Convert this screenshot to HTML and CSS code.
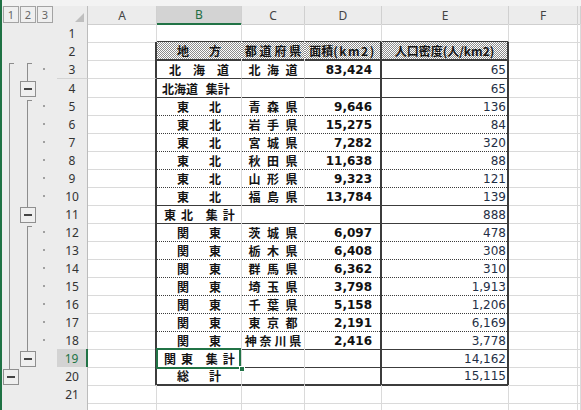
FILE: index.html
```html
<!DOCTYPE html>
<html lang="ja">
<head>
<meta charset="utf-8">
<title>Sheet</title>
<link rel="stylesheet" href="styles.css">
</head>
<body>
<div class="app">
  <div class="topbar"></div>

  <div class="row hdr">
    <div class="ol-btns"><span class="lvl">1</span><span class="lvl">2</span><span class="lvl">3</span></div>
    <div class="corner"><span class="tri"></span></div>
    <div class="ch">A</div>
    <div class="ch hl">B</div>
    <div class="ch">C</div>
    <div class="ch">D</div>
    <div class="ch">E</div>
    <div class="ch">F</div>
    <div class="ch"></div>
  </div>

  <div class="row top">
    <div class="ol"><i></i><i></i><i></i></div>
    <div class="rh">1</div>
    <div class="c a"></div><div class="c t b"></div><div class="c t cc"></div><div class="c t d"></div><div class="c t e"></div><div class="c f"></div><div class="c g"></div>
  </div>

  <div class="row in hd">
    <div class="ol"><i></i><i></i><i></i></div>
    <div class="rh">2</div>
    <div class="c a"></div>
    <div class="c t b dist"><span>地</span><span>方</span></div>
    <div class="c t cc dist"><span>都</span><span>道</span><span>府</span><span>県</span></div>
    <div class="c t d ctr">面積<span class="wide">(km2)</span></div>
    <div class="c t e ctr">人口密度(人/km2)</div>
    <div class="c f"></div><div class="c g"></div>
  </div>

  <div class="row in sol tall">
    <div class="ol"><i class="l1 start"></i><i class="l2 start"></i><i class="dot"></i></div>
    <div class="rh">3</div>
    <div class="c a"></div>
    <div class="c t b dist"><span>北</span><span>海</span><span>道</span></div>
    <div class="c t cc dist"><span>北</span><span>海</span><span>道</span></div>
    <div class="c t d num">83,424</div>
    <div class="c t e num">65</div>
    <div class="c f"></div><div class="c g"></div>
  </div>

  <div class="row in sol">
    <div class="ol"><i class="l1 line"></i><i class="l2 box"><b></b></i><i></i></div>
    <div class="rh">4</div>
    <div class="c a"></div>
    <div class="c t b lbl">北海道 集計</div>
    <div class="c t cc"></div>
    <div class="c t d"></div>
    <div class="c t e num">65</div>
    <div class="c f"></div><div class="c g"></div>
  </div>

  <div class="row in dot">
    <div class="ol"><i class="l1 line"></i><i class="l2 start"></i><i class="dot"></i></div>
    <div class="rh">5</div>
    <div class="c a"></div>
    <div class="c t b dist"><span>東</span><span>北</span></div>
    <div class="c t cc dist"><span>青</span><span>森</span><span>県</span></div>
    <div class="c t d num">9,646</div>
    <div class="c t e num">136</div>
    <div class="c f"></div><div class="c g"></div>
  </div>

  <div class="row in dot">
    <div class="ol"><i class="l1 line"></i><i class="l2 line"></i><i class="dot"></i></div>
    <div class="rh">6</div>
    <div class="c a"></div>
    <div class="c t b dist"><span>東</span><span>北</span></div>
    <div class="c t cc dist"><span>岩</span><span>手</span><span>県</span></div>
    <div class="c t d num">15,275</div>
    <div class="c t e num">84</div>
    <div class="c f"></div><div class="c g"></div>
  </div>

  <div class="row in dot">
    <div class="ol"><i class="l1 line"></i><i class="l2 line"></i><i class="dot"></i></div>
    <div class="rh">7</div>
    <div class="c a"></div>
    <div class="c t b dist"><span>東</span><span>北</span></div>
    <div class="c t cc dist"><span>宮</span><span>城</span><span>県</span></div>
    <div class="c t d num">7,282</div>
    <div class="c t e num">320</div>
    <div class="c f"></div><div class="c g"></div>
  </div>

  <div class="row in dot">
    <div class="ol"><i class="l1 line"></i><i class="l2 line"></i><i class="dot"></i></div>
    <div class="rh">8</div>
    <div class="c a"></div>
    <div class="c t b dist"><span>東</span><span>北</span></div>
    <div class="c t cc dist"><span>秋</span><span>田</span><span>県</span></div>
    <div class="c t d num">11,638</div>
    <div class="c t e num">88</div>
    <div class="c f"></div><div class="c g"></div>
  </div>

  <div class="row in dot">
    <div class="ol"><i class="l1 line"></i><i class="l2 line"></i><i class="dot"></i></div>
    <div class="rh">9</div>
    <div class="c a"></div>
    <div class="c t b dist"><span>東</span><span>北</span></div>
    <div class="c t cc dist"><span>山</span><span>形</span><span>県</span></div>
    <div class="c t d num">9,323</div>
    <div class="c t e num">121</div>
    <div class="c f"></div><div class="c g"></div>
  </div>

  <div class="row in sol">
    <div class="ol"><i class="l1 line"></i><i class="l2 line"></i><i class="dot"></i></div>
    <div class="rh">10</div>
    <div class="c a"></div>
    <div class="c t b dist"><span>東</span><span>北</span></div>
    <div class="c t cc dist"><span>福</span><span>島</span><span>県</span></div>
    <div class="c t d num">13,784</div>
    <div class="c t e num">139</div>
    <div class="c f"></div><div class="c g"></div>
  </div>

  <div class="row in sol">
    <div class="ol"><i class="l1 line"></i><i class="l2 box"><b></b></i><i></i></div>
    <div class="rh">11</div>
    <div class="c a"></div>
    <div class="c t b sub">東北 集計</div>
    <div class="c t cc"></div>
    <div class="c t d"></div>
    <div class="c t e num">888</div>
    <div class="c f"></div><div class="c g"></div>
  </div>

  <div class="row in dot">
    <div class="ol"><i class="l1 line"></i><i class="l2 start"></i><i class="dot"></i></div>
    <div class="rh">12</div>
    <div class="c a"></div>
    <div class="c t b dist"><span>関</span><span>東</span></div>
    <div class="c t cc dist"><span>茨</span><span>城</span><span>県</span></div>
    <div class="c t d num">6,097</div>
    <div class="c t e num">478</div>
    <div class="c f"></div><div class="c g"></div>
  </div>

  <div class="row in dot">
    <div class="ol"><i class="l1 line"></i><i class="l2 line"></i><i class="dot"></i></div>
    <div class="rh">13</div>
    <div class="c a"></div>
    <div class="c t b dist"><span>関</span><span>東</span></div>
    <div class="c t cc dist"><span>栃</span><span>木</span><span>県</span></div>
    <div class="c t d num">6,408</div>
    <div class="c t e num">308</div>
    <div class="c f"></div><div class="c g"></div>
  </div>

  <div class="row in dot">
    <div class="ol"><i class="l1 line"></i><i class="l2 line"></i><i class="dot"></i></div>
    <div class="rh">14</div>
    <div class="c a"></div>
    <div class="c t b dist"><span>関</span><span>東</span></div>
    <div class="c t cc dist"><span>群</span><span>馬</span><span>県</span></div>
    <div class="c t d num">6,362</div>
    <div class="c t e num">310</div>
    <div class="c f"></div><div class="c g"></div>
  </div>

  <div class="row in dot">
    <div class="ol"><i class="l1 line"></i><i class="l2 line"></i><i class="dot"></i></div>
    <div class="rh">15</div>
    <div class="c a"></div>
    <div class="c t b dist"><span>関</span><span>東</span></div>
    <div class="c t cc dist"><span>埼</span><span>玉</span><span>県</span></div>
    <div class="c t d num">3,798</div>
    <div class="c t e num">1,913</div>
    <div class="c f"></div><div class="c g"></div>
  </div>

  <div class="row in dot">
    <div class="ol"><i class="l1 line"></i><i class="l2 line"></i><i class="dot"></i></div>
    <div class="rh">16</div>
    <div class="c a"></div>
    <div class="c t b dist"><span>関</span><span>東</span></div>
    <div class="c t cc dist"><span>千</span><span>葉</span><span>県</span></div>
    <div class="c t d num">5,158</div>
    <div class="c t e num">1,206</div>
    <div class="c f"></div><div class="c g"></div>
  </div>

  <div class="row in dot">
    <div class="ol"><i class="l1 line"></i><i class="l2 line"></i><i class="dot"></i></div>
    <div class="rh">17</div>
    <div class="c a"></div>
    <div class="c t b dist"><span>関</span><span>東</span></div>
    <div class="c t cc dist"><span>東</span><span>京</span><span>都</span></div>
    <div class="c t d num">2,191</div>
    <div class="c t e num">6,169</div>
    <div class="c f"></div><div class="c g"></div>
  </div>

  <div class="row in sol">
    <div class="ol"><i class="l1 line"></i><i class="l2 line"></i><i class="dot"></i></div>
    <div class="rh">18</div>
    <div class="c a"></div>
    <div class="c t b dist"><span>関</span><span>東</span></div>
    <div class="c t cc dist"><span>神</span><span>奈</span><span>川</span><span>県</span></div>
    <div class="c t d num">2,416</div>
    <div class="c t e num">3,778</div>
    <div class="c f"></div><div class="c g"></div>
  </div>

  <div class="row in sol">
    <div class="ol"><i class="l1 line"></i><i class="l2 box"><b></b></i><i></i></div>
    <div class="rh hl">19</div>
    <div class="c a"></div>
    <div class="c t b sub sel">関東 集計<span class="handle"></span></div>
    <div class="c t cc"></div>
    <div class="c t d"></div>
    <div class="c t e num">14,162</div>
    <div class="c f"></div><div class="c g"></div>
  </div>

  <div class="row in end">
    <div class="ol"><i class="l1 box"><b></b></i><i></i><i></i></div>
    <div class="rh">20</div>
    <div class="c a"></div>
    <div class="c t b dist"><span>総</span><span>計</span></div>
    <div class="c t cc"></div>
    <div class="c t d"></div>
    <div class="c t e num">15,115</div>
    <div class="c f"></div><div class="c g"></div>
  </div>

  <div class="row">
    <div class="ol"><i></i><i></i><i></i></div>
    <div class="rh">21</div>
    <div class="c a"></div><div class="c b"></div><div class="c cc"></div><div class="c d"></div><div class="c e"></div><div class="c f"></div><div class="c g"></div>
  </div>

  <div class="row">
    <div class="ol"><i></i><i></i><i></i></div>
    <div class="rh"></div>
    <div class="c a"></div><div class="c b"></div><div class="c cc"></div><div class="c d"></div><div class="c e"></div><div class="c f"></div><div class="c g"></div>
  </div>
</div>
</body>
</html>
```

FILE: styles.css
```css
* { box-sizing: border-box; }
html, body { margin: 0; padding: 0; }
body {
  background: #fff;
  font-family: "Noto Sans", "Liberation Sans", sans-serif;
  color: #222;
}

.app {
  width: 581px;
  height: 410px;
  overflow: hidden;
  border-left: 2px solid #1f7244;
  background: #fff;
}

.topbar { height: 6px; background: #f3f3f3; }

.row {
  display: grid;
  grid-template-columns: 55px 31px 69px 85px 63px 77px 127px 69px 1fr;
  height: 18px;
}
.row.tall { height: 19px; }

/* ---------- headers ---------- */
.ol-btns {
  background: #ececec;
  display: flex;
  gap: 1px;
  padding-left: 1px;
}
.lvl {
  width: 16px;
  height: 17px;
  border: 1px solid #a3a3a3;
  background: #efefef;
  color: #666;
  font-size: 11px;
  display: flex;
  align-items: center;
  justify-content: center;
}
.corner {
  background: #ececec;
  border-right: 1px solid #bdbdbd;
  border-bottom: 1px solid #c9c9c9;
  display: flex;
  align-items: flex-end;
  justify-content: flex-end;
  padding: 0 3px 2px 0;
}
.tri {
  width: 0;
  height: 0;
  border-left: 9px solid transparent;
  border-bottom: 9px solid #bfbfbf;
}
.ch {
  background: #ececec;
  border-right: 1px solid #d0d0d0;
  border-bottom: 1px solid #cfcfcf;
  display: flex;
  align-items: center;
  justify-content: center;
  font-size: 12px;
  color: #444;
}
.ch.hl {
  background: #d3d3d3;
  color: #1f6e43;
  border-bottom: 2px solid #217346;
}
.rh {
  background: #ececec;
  border-right: 1px solid #bcbcbc;
  border-bottom: 1px solid #d3d3d3;
  display: flex;
  align-items: center;
  justify-content: center;
  font-size: 12px;
  color: #333;
  padding-top: 1px;
}
.rh.hl {
  background: #d3d3d3;
  color: #217346;
  border-right: 2px solid #217346;
}

/* ---------- outline (group) gutter ---------- */
.ol {
  background: #ececec;
  display: grid;
  grid-template-columns: 17px 18px 20px;
}
.ol i { display: block; }
.ol .l1 { --x: 7px; }
.ol .l2 { --x: 8px; }
.ol .line {
  background: linear-gradient(#8d8d8d, #8d8d8d) no-repeat var(--x) 0 / 1px 100%;
}
.ol .start {
  background:
    linear-gradient(#8d8d8d, #8d8d8d) no-repeat var(--x) 3px / 1px calc(100% - 3px),
    linear-gradient(#8d8d8d, #8d8d8d) no-repeat var(--x) 3px / 5px 1px;
}
.ol .box {
  background: linear-gradient(#8d8d8d, #8d8d8d) no-repeat var(--x) 0 / 1px 2px;
  padding: 2px 0 0 1px;
}
.ol .box b {
  display: flex;
  width: 16px;
  height: 16px;
  border: 1px solid #8f8f8f;
  background: #efefef;
  align-items: center;
  justify-content: center;
}
.ol .box b::before {
  content: "";
  width: 8px;
  height: 2px;
  background: #454545;
}
.ol .dot {
  background: linear-gradient(#a0a0a0, #a0a0a0) no-repeat 6px 8px / 2px 2px;
}

/* ---------- cells ---------- */
.c {
  border-right: 1px solid #dadada;
  border-bottom: 1px solid #dadada;
  display: flex;
  align-items: center;
  white-space: nowrap;
  min-width: 0;
  padding-top: 1px;
}
.t {
  font-family: "Noto Sans CJK JP", sans-serif;
  font-weight: 700;
  font-size: 12px;
  color: #141414;
  line-height: 1;
}

/* table borders */
.top .t { border-bottom: 2px solid #3c3c3c; }
.in .a { border-right: 2px solid #3c3c3c; }
.in .d, .in .e { border-right: 2px solid #3c3c3c; }
.hd .t {
  border-bottom: 2px solid #3c3c3c;
  background: repeating-conic-gradient(#8c8c8c 0 25%, #ffffff 0 50%) 0 0 / 2px 2px;
}
.hd .b, .hd .cc { border-right-color: transparent; }
.wide { letter-spacing: 1.5px; }
.sol .t { border-bottom: 1px solid #3c3c3c; }
.dot .t { border-bottom: 1px dotted #3c3c3c; }
.end .t { border-bottom: 2px solid #3c3c3c; }

/* alignment */
.dist { justify-content: space-evenly; }
.ctr { justify-content: center; }
.lbl { padding-left: 5px; word-spacing: 5px; }
.sub { padding-left: 7px; letter-spacing: 5px; }
.num {
  justify-content: flex-end;
  font-family: "DejaVu Sans", sans-serif;
  font-size: 12px;
}
.d.num { font-weight: 700; padding-right: 8px; color: #111; }
.e.num { font-weight: 400; padding-right: 1px; color: #1f2f45; }

/* selection */
.sel { position: relative; }
.sel::after {
  content: "";
  position: absolute;
  left: -1px;
  top: -1px;
  right: 0;
  bottom: -2px;
  border: 2px solid #217346;
  pointer-events: none;
}
.handle {
  position: absolute;
  right: -4px;
  bottom: -5px;
  width: 6px;
  height: 6px;
  background: #217346;
  border: 1px solid #fff;
  z-index: 2;
}
```
